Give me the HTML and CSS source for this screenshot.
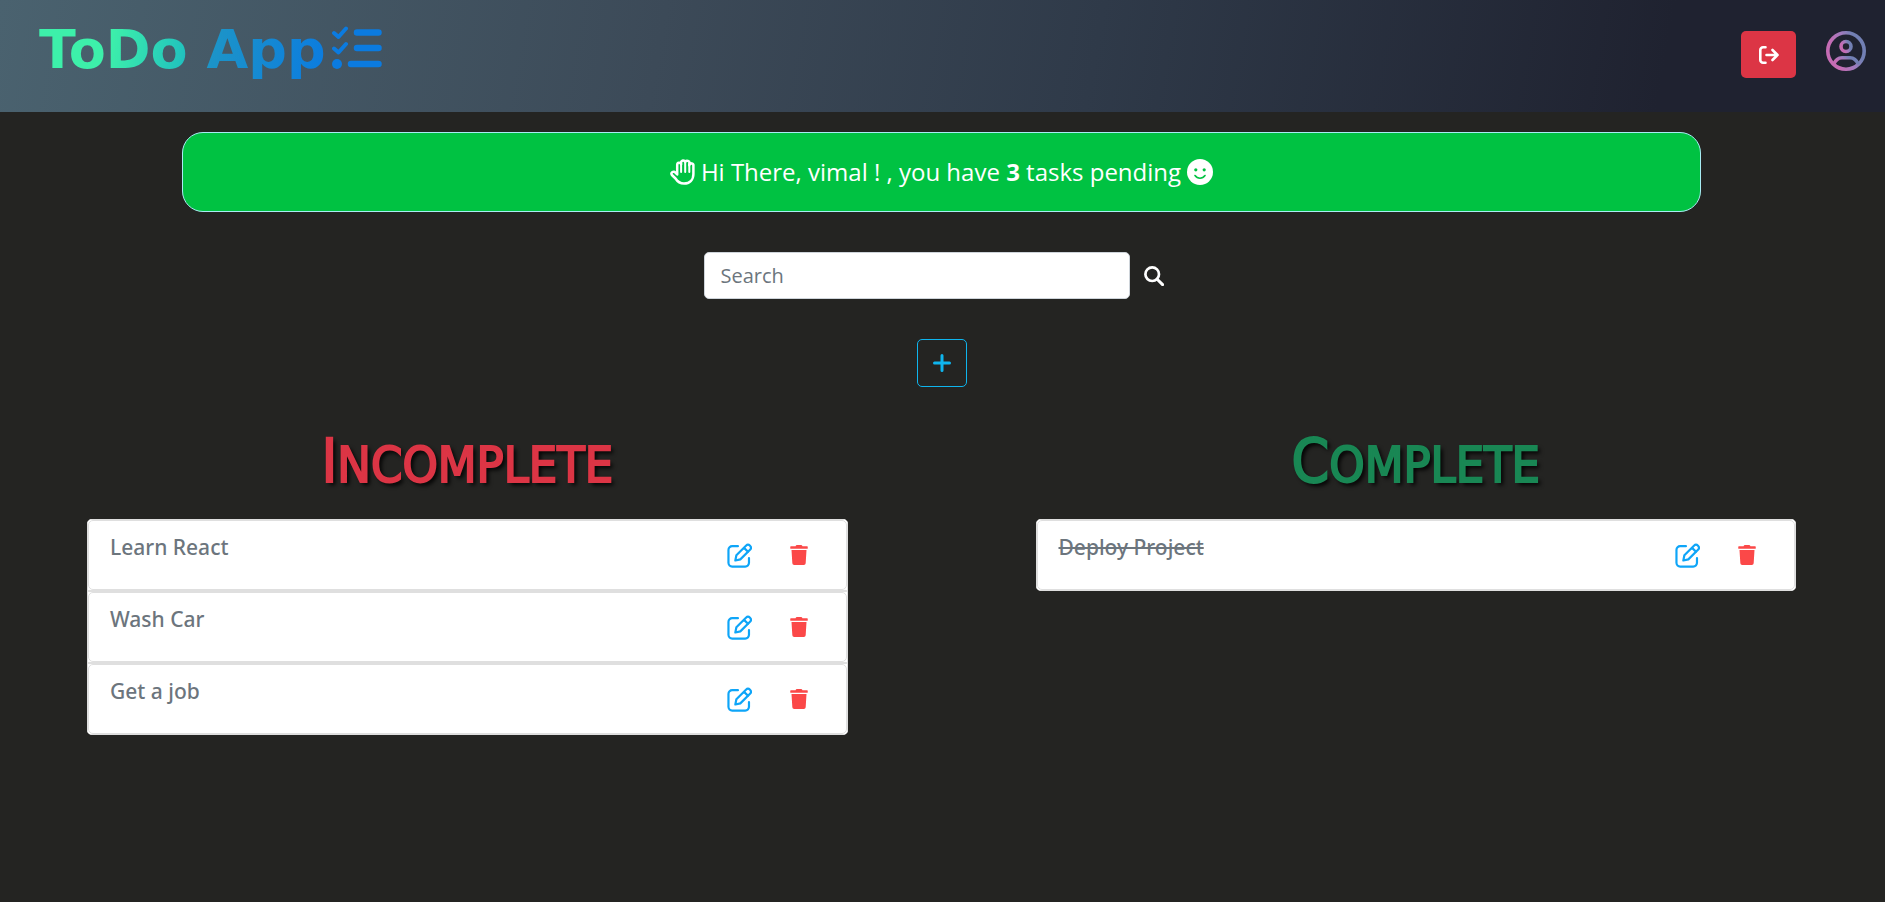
FILE: index.html
```html
<!DOCTYPE html>
<html lang="en">
<head>
<meta charset="utf-8">
<meta name="viewport" content="width=device-width, initial-scale=1">
<title>ToDo App</title>
<link rel="stylesheet" href="styles.css">
</head>
<body>
<svg class="defs" width="0" height="0" aria-hidden="true">
  <defs>
    <linearGradient id="user-grad" x1="0" y1="0.7" x2="1" y2="0.3">
      <stop offset="0.2" stop-color="#c56cb4"/>
      <stop offset="0.55" stop-color="#a07bbd"/>
      <stop offset="0.8" stop-color="#7280b4"/>
    </linearGradient>
    <symbol id="edit" viewBox="0 0 24 24">
      <path d="M10.500 3H5a3.600 3.600 0 0 0-3.600 3.600V19A3.600 3.600 0 0 0 5 22.600h12.500A3.600 3.600 0 0 0 21.100 19v-4.500M8 16.800l1-5 9.200-9.200a2.700 2.700 0 0 1 3.900 3.900L12.800 15.700zM16.300 4.600l3.900 3.900" fill="none" stroke="currentColor" stroke-width="2.100" stroke-linecap="round" stroke-linejoin="round"/>
    </symbol>
    <symbol id="trash" viewBox="0 0 448 512">
      <path d="M432 32H312l-9.400-18.700A24 24 0 0 0 281.100 0H166.800a23.700 23.700 0 0 0-21.400 13.300L136 32H16A16 16 0 0 0 0 48v32a16 16 0 0 0 16 16h416a16 16 0 0 0 16-16V48a16 16 0 0 0-16-16zM53.200 467a48 48 0 0 0 47.900 45h245.800a48 48 0 0 0 47.900-45L416 128H32z" fill="currentColor"/>
    </symbol>
  </defs>
</svg>

<header class="topbar">
  <a class="brand" href="#">
    <span class="brand-name">ToDo App</span>
    <svg class="brand-icon" viewBox="0 0 50 43" aria-hidden="true">
      <g fill="none" stroke="#0b7be0" stroke-linecap="round" stroke-linejoin="round">
        <path d="M2 7l4.500 4L14 2.500M2 22.500l4.500 4L14 18" stroke-width="4"/>
        <path d="M25 6.500h21.500M25 22h21.500M19 38h27.500" stroke-width="6.500"/>
      </g>
      <circle cx="5" cy="38" r="5" fill="#0b7be0"/>
    </svg>
  </a>
  <div class="account">
    <button class="logout" type="button" aria-label="Log out">
      <svg viewBox="0 0 20 18" aria-hidden="true">
        <path d="M6.500 1.300H4A2.700 2.700 0 0 0 1.300 4v10A2.700 2.700 0 0 0 4 16.700h2.500M7.500 9h11M13.500 4l5 5-5 5" fill="none" stroke="#fff" stroke-width="2.600" stroke-linecap="round" stroke-linejoin="round"/>
      </svg>
    </button>
    <a class="profile" href="#" aria-label="Profile">
      <svg viewBox="0 0 40 40" aria-hidden="true">
        <g fill="none" stroke="url(#user-grad)" stroke-width="3.600">
          <circle cx="20" cy="20" r="18.200"/>
          <circle cx="20" cy="15.500" r="5"/>
          <path d="M7.500 33.500C9.500 29 12.500 26.800 16 26.800h8c3.500 0 6.500 2.200 8.500 6.700"/>
        </g>
      </svg>
    </a>
  </div>
</header>

<main>
  <p class="banner">
    <svg class="hand" viewBox="0 0 25 26" aria-hidden="true">
      <path d="M7.200 15.500V5.800a2 2 0 0 1 3.900-.6V3.700a2 2 0 0 1 4.100-.5 2 2 0 0 1 4.100 1.400v1.600a2 2 0 0 1 4.100.5V15c0 6-3.900 9.500-9.400 9.500-4.500 0-6.800-2.300-8.500-5L1.900 16a2.100 2.100 0 0 1 3.500-2.400z" fill="none" stroke="#fff" stroke-width="2.500" stroke-linejoin="round"/>
      <path d="M11.100 5v8M15.200 4v9M19.300 6v7" stroke="#fff" stroke-width="2" stroke-linecap="round"/>
    </svg>
    <span>Hi There, vimal ! , you have <strong>3</strong> tasks pending</span>
    <svg class="smile" viewBox="0 0 26 26" aria-hidden="true">
      <circle cx="13" cy="13" r="13" fill="#fff"/>
      <circle cx="8.800" cy="10.800" r="1.600" fill="#00c242"/>
      <circle cx="17.200" cy="10.800" r="1.600" fill="#00c242"/>
      <path d="M8 16.500c2.500 3.600 7.500 3.600 10 0" fill="none" stroke="#00c242" stroke-width="1.600" stroke-linecap="round"/>
    </svg>
  </p>

  <form class="search" role="search">
    <input type="search" placeholder="Search" aria-label="Search">
    <button type="button" aria-label="Search tasks">
      <svg viewBox="0 0 20 20" aria-hidden="true">
        <circle cx="8.200" cy="8.200" r="6.800" fill="none" stroke="#fff" stroke-width="2.700"/>
        <path d="M13.200 13.200l5.400 5.400" stroke="#fff" stroke-width="3" stroke-linecap="round"/>
      </svg>
    </button>
  </form>

  <button class="add" type="button" aria-label="Add task">
    <svg viewBox="0 0 18 18" aria-hidden="true"><path d="M9 1.500v15M1.500 9h15" stroke="currentColor" stroke-width="3" stroke-linecap="round"/></svg>
  </button>

  <div class="columns">
    <section>
      <h2 class="incomplete">Incomplete</h2>
      <ul class="tasks">
        <li><div class="task"><span class="title">Learn React</span>
          <button class="edit" type="button" aria-label="Edit Learn React"><svg><use href="#edit"/></svg></button>
          <button class="trash" type="button" aria-label="Delete Learn React"><svg><use href="#trash"/></svg></button></div></li>
        <li><div class="task"><span class="title">Wash Car</span>
          <button class="edit" type="button" aria-label="Edit Wash Car"><svg><use href="#edit"/></svg></button>
          <button class="trash" type="button" aria-label="Delete Wash Car"><svg><use href="#trash"/></svg></button></div></li>
        <li><div class="task"><span class="title">Get a job</span>
          <button class="edit" type="button" aria-label="Edit Get a job"><svg><use href="#edit"/></svg></button>
          <button class="trash" type="button" aria-label="Delete Get a job"><svg><use href="#trash"/></svg></button></div></li>
      </ul>
    </section>
    <section>
      <h2 class="complete">Complete</h2>
      <ul class="tasks">
        <li><div class="task"><s class="title">Deploy Project</s>
          <button class="edit" type="button" aria-label="Edit Deploy Project"><svg><use href="#edit"/></svg></button>
          <button class="trash" type="button" aria-label="Delete Deploy Project"><svg><use href="#trash"/></svg></button></div></li>
      </ul>
    </section>
  </div>
</main>
</body>
</html>
```

FILE: styles.css
```css
* { box-sizing: border-box; }

body {
  margin: 0;
  min-height: 100vh;
  background: #242422;
  color: #fff;
  font-family: "Open Sans", "Noto Sans", sans-serif;
  font-size: 20px;
}

button {
  padding: 0;
  border: 0;
  background: none;
  cursor: pointer;
}

svg { display: block; }
.defs { position: absolute; }

.topbar {
  display: flex;
  justify-content: space-between;
  height: 112px;
  padding: 0 19px 0 39px;
  background: linear-gradient(100deg, #4a626f 0%, #3c4a58 35%, #2f3a49 58%, #1f2230 88%);
}

.brand {
  display: flex;
  gap: 6px;
  align-items: flex-start;
  padding-top: 20px;
  text-decoration: none;
}

.brand-name {
  font-family: "DejaVu Sans", sans-serif;
  font-size: 54px;
  font-weight: 700;
  line-height: 60px;
  color: transparent;
  background: linear-gradient(100deg, #3df0aa 25%, #22c4bd 50%, #1c94c8 60%, #0b7be0 100%);
  -webkit-background-clip: text;
  background-clip: text;
}

.brand-icon { width: 50px; height: 43px; margin-top: 6px; }

.account {
  display: flex;
  gap: 30px;
  align-items: flex-start;
  padding-top: 31px;
}

.logout {
  display: flex;
  align-items: center;
  justify-content: center;
  width: 55px;
  height: 47px;
  border-radius: 5px;
  background: #dc3545;
}

.logout svg { width: 20px; height: 18px; }
.profile svg { width: 40px; height: 40px; }

main {
  display: flex;
  flex-direction: column;
  align-items: center;
  padding: 20px 2px 0 0;
}

.banner {
  display: flex;
  gap: 6px;
  align-items: center;
  justify-content: center;
  align-self: stretch;
  min-height: 80px;
  margin: 0 182px 40px;
  border: 1px solid #a8ecf4;
  border-radius: 21px;
  background: #00c242;
  font-size: 24px;
  line-height: 32px;
}

.hand { width: 25px; height: 26px; }
.smile { width: 26px; height: 26px; }

.search {
  display: flex;
  gap: 14px;
  align-items: center;
  margin-bottom: 40px;
  padding-right: 16px;
}

.search input {
  width: 426px;
  height: 47px;
  padding: 0 16px;
  border: 1px solid #ced4da;
  border-radius: 5px;
  background: #fff;
  font: inherit;
}

.search input::placeholder { color: #6c757d; }
.search svg { width: 20px; height: 20px; }

.add {
  display: flex;
  align-items: center;
  justify-content: center;
  width: 50px;
  height: 48px;
  border: 1px solid #0fb5ee;
  border-radius: 5px;
  color: #0fb5ee;
}

.add svg { width: 18px; height: 18px; }

.columns {
  display: grid;
  grid-template-columns: 1fr 1fr;
  gap: 188px;
  align-self: stretch;
  margin-top: 36px;
  padding: 0 87px;
}

h2 {
  margin: 0 0 16px;
  font-family: "DejaVu Sans Condensed", "DejaVu Sans", sans-serif;
  font-size: 50px;
  font-weight: 400;
  line-height: 76px;
  text-align: center;
  text-transform: uppercase;
  text-shadow: 3px 3px 4px #000;
  -webkit-text-stroke: 2px currentColor;
}

h2::first-letter { font-size: 60px; }
.incomplete { color: #dc3545; }
.complete { color: #198754; }

.tasks {
  margin: 0;
  padding: 0;
  overflow: hidden;
  border-radius: 5px;
  background: #fff;
  list-style: none;
}

.tasks li { border: 1px solid #dfdfdf; }

.task {
  display: flex;
  align-items: center;
  min-height: 70px;
  padding: 0 38px 0 21px;
  border: 1px solid #dfdfdf;
  border-radius: 5px;
}

.title {
  margin: 0 auto 16px 0;
  color: #6c757d;
  font-family: "Noto Sans", "Open Sans", sans-serif;
  font-size: 21px;
  font-weight: 500;
  line-height: 28px;
}

.edit { margin-right: 38px; color: #0ea5f8; }
.edit svg { width: 25px; height: 25px; }
.trash { color: #fb4848; }
.trash svg { width: 18px; height: 20px; }
```
